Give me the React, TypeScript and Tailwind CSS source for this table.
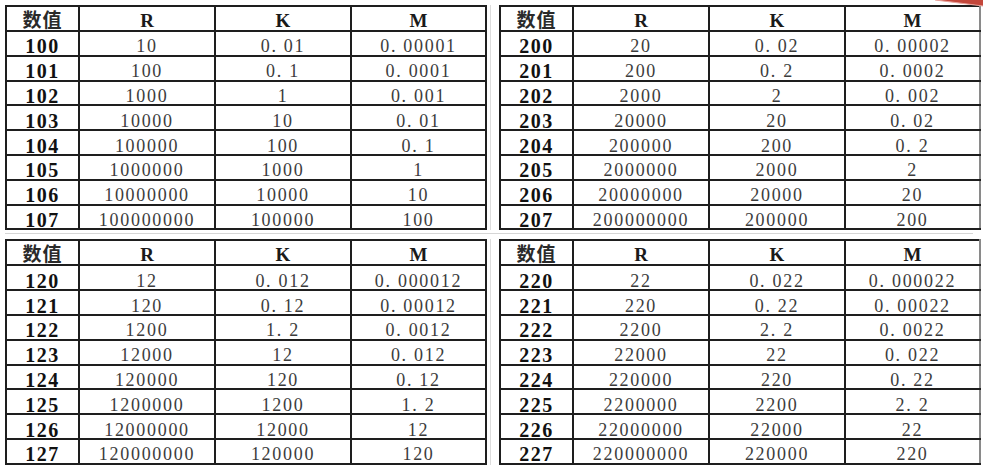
const serif = { fontFamily: '"Liberation Serif", "Noto Sans CJK SC", serif' };

type Block = { base: number; r: string[]; k: string[]; m: string[] };

const blocks: Block[] = [
  {
    base: 100,
    r: ["10", "100", "1000", "10000", "100000", "1000000", "10000000", "100000000"],
    k: ["0. 01", "0. 1", "1", "10", "100", "1000", "10000", "100000"],
    m: ["0. 00001", "0. 0001", "0. 001", "0. 01", "0. 1", "1", "10", "100"],
  },
  {
    base: 200,
    r: ["20", "200", "2000", "20000", "200000", "2000000", "20000000", "200000000"],
    k: ["0. 02", "0. 2", "2", "20", "200", "2000", "20000", "200000"],
    m: ["0. 00002", "0. 0002", "0. 002", "0. 02", "0. 2", "2", "20", "200"],
  },
  {
    base: 120,
    r: ["12", "120", "1200", "12000", "120000", "1200000", "12000000", "120000000"],
    k: ["0. 012", "0. 12", "1. 2", "12", "120", "1200", "12000", "120000"],
    m: ["0. 000012", "0. 00012", "0. 0012", "0. 012", "0. 12", "1. 2", "12", "120"],
  },
  {
    base: 220,
    r: ["22", "220", "2200", "22000", "220000", "2200000", "22000000", "220000000"],
    k: ["0. 022", "0. 22", "2. 2", "22", "220", "2200", "22000", "220000"],
    m: ["0. 000022", "0. 00022", "0. 0022", "0. 022", "0. 22", "2. 2", "22", "220"],
  },
];

function CodeTable({ block, right }: { block: Block; right?: boolean }) {
  const edge = right ? "border-r-[#8a8a8a]" : "";
  const head = "border-2 border-[#1e1e1e] p-0 pt-[4px] text-[19px] font-bold leading-[18px] text-[#1a1a1a]";
  const cell = "border-2 border-[#1e1e1e] p-0 pt-[6px] text-center text-[18px] leading-[16px] tracking-[1.7px] text-[#3c3c3c]";
  return (
    <table className="w-[480px] h-[224px] border-collapse table-fixed bg-white" style={serif}>
      <colgroup>
        <col className="w-[73px]" />
        <col className="w-[136px]" />
        <col className="w-[136px]" />
        <col className="w-[135px]" />
      </colgroup>
      <thead>
        <tr className="h-[25px]">
          <th className={`${head} tracking-[1px] text-[#2a2a2a]`}>数值</th>
          <th className={head}>R</th>
          <th className={head}>K</th>
          <th className={`${head} ${edge}`}>M</th>
        </tr>
      </thead>
      <tbody>
        {block.r.map((r, i) => (
          <tr key={i} className="h-[24.8px]">
            <td className="border-2 border-[#1e1e1e] p-0 pt-[6px] text-center text-[20px] font-bold leading-[16px] tracking-[1.5px] text-[#111]">
              {block.base + i}
            </td>
            <td className={cell}>{r}</td>
            <td className={cell}>{block.k[i]}</td>
            <td className={`${cell} ${edge}`}>{block.m[i]}</td>
          </tr>
        ))}
      </tbody>
    </table>
  );
}

export default function App() {
  return (
    <div className="relative w-[983px] h-[467px] overflow-hidden bg-white pt-[5px] pl-[5px]">
      {/* red marker swoosh peeking in at the top-right corner */}
      <svg className="absolute top-0 right-0" width="48" height="10" viewBox="0 0 48 10">
        <path d="M0 0 Q24 3 48 6 L48 0 Z" fill="#c4473b" />
        <path d="M0 0 Q24 3 48 6" fill="none" stroke="#e8a19a" strokeWidth="1.2" />
      </svg>

      <div className="flex gap-[8px] pb-[3px] border-b border-[#d6d6d6] w-[968px]">
        <div className="pr-[3px] border-r border-[#dcdcdc]">
          <CodeTable block={blocks[0]} />
        </div>
        <CodeTable block={blocks[1]} right />
      </div>
      <div className="flex gap-[8px] mt-[5px] w-[968px]">
        <div className="pr-[3px] border-r border-[#dcdcdc]">
          <CodeTable block={blocks[2]} />
        </div>
        <CodeTable block={blocks[3]} right />
      </div>
    </div>
  );
}
